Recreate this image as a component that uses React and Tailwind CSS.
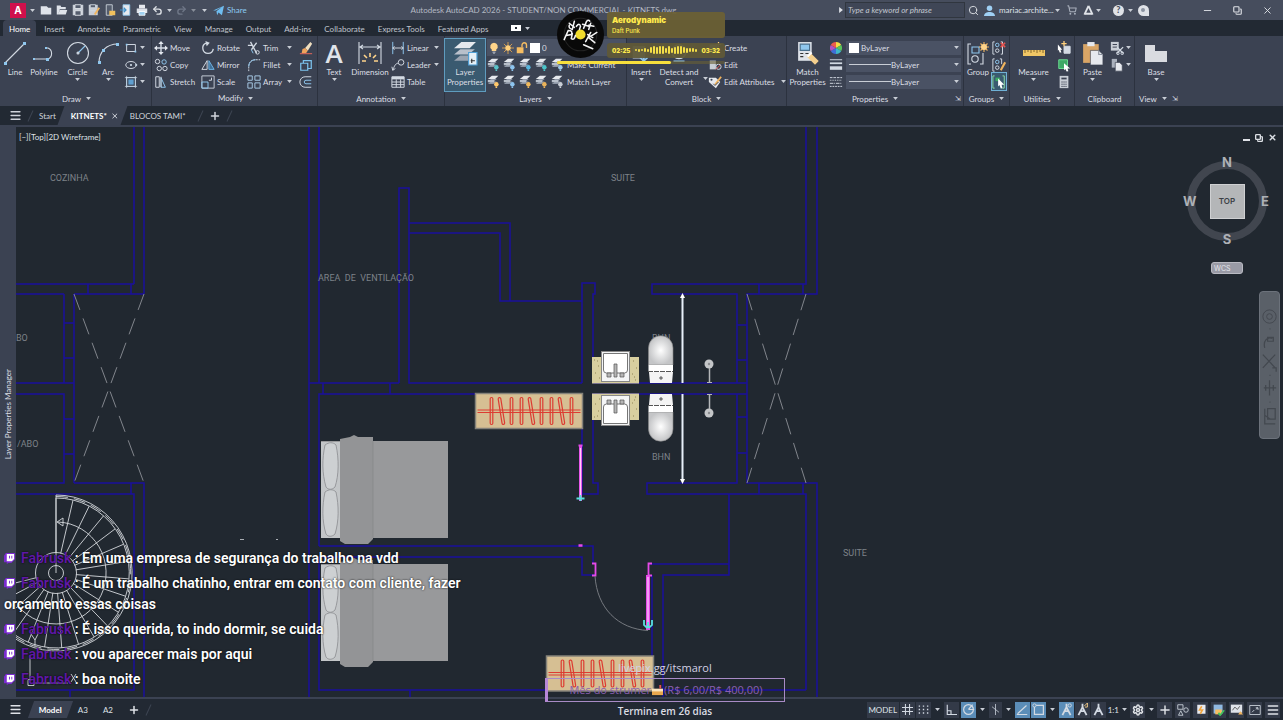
import { Menu, Plus, X, Minus, Copy, Search, ShoppingCart, Settings, Undo2 } from "lucide-react";
import clsx from "clsx";

/* ---------- small pieces ---------- */

const Svg = ({ className = "size-[14px]", box = "0 0 16 16", children }) => (
  <svg viewBox={box} className={clsx("shrink-0", className)} fill="none" stroke="#d3dae3" strokeWidth="1.1" aria-hidden="true">
    {children}
  </svg>
);

const Caret = ({ className }) => (
  <svg viewBox="0 0 8 5" className={clsx("h-[3px] w-[5px] shrink-0", className)} aria-hidden="true">
    <path d="M0 0h8L4 5z" fill="#c9ced6" />
  </svg>
);

/* ---------- icons ---------- */

const icons = {
  rect: <Svg><path d="M3 4h10v8H3z" /><path d="M2 3h2v2H2zM12 11h2v2h-2z" fill="#8fc7ee" stroke="none" /></Svg>,
  ellipse: <Svg><ellipse cx="8" cy="8" rx="6" ry="4" /><circle cx="8" cy="8" r=".8" fill="#8fc7ee" /><circle cx="14" cy="8" r=".8" fill="#8fc7ee" /></Svg>,
  hatch: <Svg><path d="M3 3h10v10H3z" stroke="#9ecbec" /><path d="M5 5h6v6H5z" fill="#5f9fd0" stroke="none" /><path d="M1 3h14M1 13h14M3 1v14M13 1v14" strokeWidth=".8" /></Svg>,
  move: <Svg><path d="M8 2v12M2 8h12" strokeWidth="1.6" /><path d="M8 0l3 3.500H5zM8 16l3-3.500H5zM0 8l3.500-3v6zM16 8l-3.500-3v6z" fill="#e4e8ee" stroke="none" /></Svg>,
  copy: <Svg><circle cx="4" cy="4" r="2.500" /><circle cx="11.500" cy="4.500" r="2.500" stroke="#8fc7ee" /><circle cx="6" cy="12" r="2.500" /><circle cx="12.500" cy="12" r="2.500" /></Svg>,
  stretch: <Svg><path d="M2 2v12h4V2z" /><path d="M8 3l5 11H8z" stroke="#8fc7ee" /><path d="M8 2v12" /></Svg>,
  rotate: <Svg><path d="M6 2.500A6 6 0 1 0 14 9" strokeWidth="1.500" /><path d="M5 0l5 2-3.500 4z" fill="#d3dae3" stroke="none" /></Svg>,
  mirror: <Svg><path d="M7 3v10H1z" stroke="#d3dae3" /><path d="M9 3v10h6z" stroke="#6fb3e4" fill="#3f6f96" /></Svg>,
  scale: <Svg><path d="M1 1h14v14H1z" strokeWidth="1" /><path d="M1 8h7v7H1z" stroke="#8fc7ee" /><path d="M9 6h3V3" /></Svg>,
  trim: <Svg><path d="M4 1l7 13M11 2L5 10M1 5h5" strokeWidth="1.500" /><circle cx="12" cy="13" r="2" /><path d="M5 10l2 4" stroke="#8fc7ee" /></Svg>,
  fillet: <Svg><path d="M2 15V10C2 5 5 2 10 2h5" strokeDasharray="2 1" /><path d="M2 10C2 5 5 2 10 2" stroke="#8fc7ee" /></Svg>,
  array: <Svg><path d="M1 1h5v5H1zM9 1h6v5H9zM1 9h5v6H1zM9 9h6v6H9z" stroke="#a9cbe6" /></Svg>,
  erase: <Svg><path d="M7 8l6-7 2 2-5 8z" fill="#f0dfc0" stroke="none" /><path d="M4 9l3-1 3 3-2 3H3z" fill="#f0a45c" stroke="none" /><path d="M1 14.500h14" stroke="#e7685c" /></Svg>,
  explode: <Svg><path d="M2 6h8v8H2zM5 6V3h9v9h-4" stroke="#7cc3ee" strokeWidth="1.400" /></Svg>,
  offset: <Svg><path d="M14 2H7a6 6 0 0 0 0 12h7" /><path d="M14 6H8a2 2 0 0 0 0 4h6" stroke="#8fc7ee" /></Svg>,
  linear: <Svg><path d="M2 1v14M14 1v14" stroke="#8fc7ee" /><path d="M2 8h12M4 6L2 8l2 2M12 6l2 2-2 2" /></Svg>,
  leader: <Svg><circle cx="11.500" cy="5" r="3.200" /><path d="M8.500 6C5 6 4 9 2 14M1 10l1 4 3-2" /></Svg>,
  table: <Svg><path d="M1 2h14v12H1z" /><path d="M1 3.500h14" strokeWidth="3" /><path d="M1 8h14M1 11h14M6 5v9M11 5v9" /></Svg>,
  bulb: <Svg className="size-[12px]"><path d="M8 1a5 5 0 0 0-3 9v2h6v-2a5 5 0 0 0-3-9z" fill="#ffd48a" stroke="none" /><path d="M6 13.500h4M7 15h2" /></Svg>,
  sun: <Svg className="size-[12px]"><path d="M8 0v16M0 8h16M2.500 2.500l11 11M13.500 2.500l-11 11" stroke="#e9a94c" /><circle cx="8" cy="8" r="3.600" fill="#ffd07c" stroke="none" /></Svg>,
  unlock: <Svg className="size-[12px]"><path d="M1 7h9v8H1z" fill="#f6bd62" stroke="none" /><path d="M8 7V4a3 3 0 0 1 6 0v4" stroke="#f6bd62" strokeWidth="1.800" /></Svg>,
  lines: <Svg><path d="M1 2h14" /><path d="M1 6h14" strokeWidth="2" /><path d="M1 11.500h14" strokeWidth="4" /></Svg>,
  dashes: <Svg><path d="M1 3h14" strokeDasharray="3 1" /><path d="M1 6h14" strokeDasharray="1 1" /><path d="M1 9.500h14" strokeDasharray="4 1 1 1" /><path d="M1 13h14" strokeDasharray="2 1" /></Svg>,
  wheel: (
    <Svg className="size-[12px]">
      <g stroke="none">
        <path d="M8 8V0a8 8 0 0 1 7 4z" fill="#f4dc45" /><path d="M8 8l7-4a8 8 0 0 1 0 8z" fill="#58c45c" />
        <path d="M8 8l7 4a8 8 0 0 1-7 4z" fill="#3fb8c9" /><path d="M8 8v8a8 8 0 0 1-7-4z" fill="#3f6fd8" />
        <path d="M8 8l-7 4a8 8 0 0 1 0-8z" fill="#b452c4" /><path d="M8 8L1 4a8 8 0 0 1 7-4z" fill="#ee5c4c" />
      </g>
    </Svg>
  ),
  ungroup: <Svg><path d="M3 1H1v14h2M10 1h2v14h-2" /><circle cx="6" cy="4.500" r="2" stroke="#8fc7ee" /><circle cx="6" cy="11" r="2" /><path d="M10 2l5 5M15 2l-5 5" stroke="#e5534f" strokeWidth="1.800" /></Svg>,
  groupEdit: <Svg><path d="M3 1H1v14h2M9 1h2v6" /><circle cx="6" cy="4.500" r="2" stroke="#8fc7ee" /><circle cx="6" cy="11" r="2" /><path d="M15 5l-5 9" stroke="#f1b45d" strokeWidth="2.400" /></Svg>,
  groupSel: <Svg><path d="M3 1H1v14h2M12 1h2v14h-2" stroke="#8fe0a8" /><path d="M4 3h5v4H4z" fill="#3da865" stroke="none" /><path d="M7 4l7 7H11l1 4-2 .500-1.500-4L7 13z" fill="#fff" stroke="none" /></Svg>,
  quickSel: <Svg><path d="M8 6h7v8H8z" fill="#d3dae3" /><path d="M1 4l5 6H4l1 3-2 0-1-3-1 1z" fill="#fff" stroke="none" /><path d="M5 3h6M8 0v6" stroke="#ffd07c" strokeWidth="1.500" /></Svg>,
  selectAll: <Svg><path d="M2 2h10v10H2z" stroke="#6bdc92" fill="#3da865" /><path d="M8 6l7 6h-3l1 3-2 .500-1.500-3L8 14z" fill="#fff" stroke="none" /></Svg>,
  calc: <Svg><path d="M3 1h10v14H3z" fill="#c9ced6" stroke="none" /><path d="M5 3h6v2H5z" fill="#3b4252" stroke="none" /><path d="M5 8h6M5 10.500h6M5 13h6" stroke="#3b4252" strokeDasharray="1.500 .8" /></Svg>,
  cut: <Svg><path d="M1 1h9v10H1z" fill="#c9ced6" stroke="none" /><path d="M3 4h5M3 7h5" stroke="#3b4252" /><path d="M8 7l7 7M15 7l-7 7" strokeWidth="1.500" /><circle cx="9" cy="14" r="1.500" /><circle cx="14" cy="14" r="1.500" /></Svg>,
  paper: <Svg><path d="M2 1h6v10H2z" fill="#aab1bd" stroke="none" /><path d="M6 5h5l3 3v7H6z" fill="#e6e9ee" stroke="#3b4252" strokeWidth=".8" /></Svg>,
  create: <Svg><path d="M2 4h9v9H2z" fill="#c9ced6" stroke="none" /><path d="M12 1v6M9 4h6" stroke="#ffd07c" strokeWidth="1.400" /></Svg>,
  edit: <Svg><path d="M2 3h7v10H2z" fill="#c9ced6" stroke="none" /><circle cx="12" cy="10" r="3" /><path d="M9 13l5-5" stroke="#e5534f" /></Svg>,
  attrs: <Svg><path d="M1 3h8l5 5-5 7-8-7z" fill="#e6e9ee" stroke="none" /><circle cx="4" cy="5.500" r="1.200" fill="#3b4252" stroke="none" /><path d="M15 2l-7 9" stroke="#f1b45d" strokeWidth="2" /><path d="M6 10l2 2 4-4" stroke="#3b4252" /></Svg>,
};

const LayerGlyph = ({ badge }) => (
  <Svg className="size-[13px]">
    <g stroke="none">
      <path d="M1 8l4-3h7l-4 3zM1 11l4-3h7l-4 3z" fill="#8d96a5" />
      <path d="M1 5l5-4h8l-4 4z" fill="#e6e9ee" />
      <path d="M1 6h8v3H1z" fill="#b9c0cb" />
      <circle cx="11.500" cy="11.500" r="2.800" fill={badge} />
      <path d="M10.500 14h2v2h-2z" fill={badge} />
    </g>
  </Svg>
);

/* ---------- ribbon ---------- */

function BigButton({ label, icon, className, arrow, active }) {
  return (
    <button
      type="button"
      className={clsx("flex h-[52px] shrink-0 flex-col items-center text-[8px] leading-[10px]", className, active && "bg-[#3a5a70] outline outline-[#5f9cbf]")}
    >
      <span className="flex h-[28px] items-center justify-center">{icon}</span>
      <span className="whitespace-pre-line text-center">{label}</span>
      {arrow && <Caret className="mt-px" />}
    </button>
  );
}

const ToolRow = ({ icon, label, arrow, className }) => (
  <button type="button" className={clsx("flex h-[17px] items-center gap-[2px] text-[8px] whitespace-nowrap", className)}>
    {icons[icon]}
    {label}
    {arrow && <Caret className="ml-auto" />}
  </button>
);

const Panel = ({ title, arrow, launcher, className, children }) => (
  <section className={clsx("flex shrink-0 flex-col border-r border-[#2c323f]", className)}>
    <div className="flex flex-1 items-start pt-[3px]">{children}</div>
    <footer className="relative flex h-[16px] items-center justify-center gap-[5px] text-[8px]">
      {title}
      {arrow && <Caret />}
      {launcher && <span className="absolute right-[2px] text-[7px]">⇲</span>}
    </footer>
  </section>
);

const drawTools = [
  ["rect", "Rectangle"],
  ["ellipse", "Ellipse"],
  ["hatch", "Hatch"],
];

const modifyTools = [
  { width: "w-[47px]", rows: [["move", "Move"], ["copy", "Copy"], ["stretch", "Stretch"]] },
  { width: "w-[46px]", rows: [["rotate", "Rotate"], ["mirror", "Mirror"], ["scale", "Scale"]] },
  { width: "w-[45px]", arrow: true, rows: [["trim", "Trim"], ["fillet", "Fillet"], ["array", "Array"]] },
];

const layerBadges = [
  ["#59c3c9", "#8ec4ee", "#59b6dd", "#4cc4c9", "#9fc9e6"],
  ["#ffc86b", "#8ec4ee", "#f0b95c", "#e9b25a", "#c9ced6"],
];

function PropertySelect({ label, icon, line }) {
  return (
    <label className="flex h-[17px] items-center gap-[3px]">
      <span className="flex w-[15px] justify-center">{icons[icon]}</span>
      <span className="relative flex h-[14px] flex-1 items-center bg-[#4a5264]">
        {line ? <span className="absolute left-[3px] h-px w-[42px] bg-[#c9ced6]" /> : <span className="absolute left-[3px] size-[10px] bg-white" />}
        <select aria-label={label} className={clsx("w-full appearance-none bg-transparent text-[8px] leading-[12px]", line ? "pl-[45px]" : "pl-[15px]")}>
          <option>ByLayer</option>
        </select>
        <Caret className="absolute right-[2px]" />
      </span>
    </label>
  );
}

function Ribbon() {
  return (
    <div className="flex h-[70px] overflow-hidden bg-[#3b4252] pl-[2px]">
      <Panel title="Draw" arrow className="w-[150px]">
        <BigButton label="Line" className="w-[26px]" icon={<Svg className="size-[24px]" box="0 0 24 24"><path d="M2 22L21 3" /><path d="M1 21h3v3H1zM20 1h3v3h-3z" fill="#8fc7ee" stroke="none" /></Svg>} />
        <BigButton label="Polyline" className="w-[32px]" icon={<Svg className="size-[24px]" box="0 0 24 24"><path d="M2 18h14a6 6 0 0 0 0-11h-2" /><path d="M1 17h2v2H1zM14 17h3v3h-3zM13 6h2v2h-2z" fill="#8fc7ee" stroke="none" /></Svg>} />
        <BigButton label="Circle" arrow className="w-[35px]" icon={<Svg className="size-[24px]" box="0 0 24 24"><circle cx="12" cy="12" r="10.500" /><path d="M12 12l7-7" stroke="#8fc7ee" /><circle cx="12" cy="12" r="1" fill="#8fc7ee" /></Svg>} />
        <BigButton label="Arc" arrow className="w-[26px]" icon={<Svg className="size-[24px]" box="0 0 24 24"><path d="M3 22C3 11 10 3 22 3" /><path d="M2 20h3v3H2zM6 8h3v3H6zM20 2h3v3h-3z" fill="#8fc7ee" stroke="none" /></Svg>} />
        <div className="flex flex-col pl-[3px]">
          {drawTools.map(([icon, name]) => (
            <button key={icon} type="button" aria-label={name} className="flex h-[17px] items-center gap-[2px]">
              {icons[icon]}
              <Caret />
            </button>
          ))}
        </div>
      </Panel>

      <Panel title="Modify" arrow className="w-[166px] pl-[2px]">
        {modifyTools.map((col) => (
          <div key={col.width} className={clsx("flex flex-col", col.width)}>
            {col.rows.map(([icon, label]) => (
              <ToolRow key={icon} icon={icon} label={label} arrow={col.arrow} />
            ))}
          </div>
        ))}
        <div className="flex flex-col pl-[7px]">
          {["erase", "explode", "offset"].map((icon) => (
            <ToolRow key={icon} icon={icon} />
          ))}
        </div>
      </Panel>

      <Panel title="Annotation" arrow className="w-[127px]">
        <BigButton label="Text" arrow className="w-[32px]" icon={<span className="font-['Open_Sans'] text-[26px] leading-none font-semibold text-[#e0e4ea]">A</span>} />
        <BigButton
          label="Dimension"
          className="w-[40px]"
          icon={
            <Svg className="size-[24px]" box="0 0 24 24">
              <path d="M1 1v22M23 1v22M2 6h20M5 4L2 6l3 2M19 4l3 2-3 2" />
              <path d="M12 12v4M6 14l3 3M18 14l-3 3M4 20h4M20 20h-4" stroke="#ffd48a" strokeWidth="1.600" />
            </Svg>
          }
        />
        <div className="flex w-[49px] flex-col pl-px">
          <ToolRow icon="linear" label="Linear" arrow />
          <ToolRow icon="leader" label="Leader" arrow />
          <ToolRow icon="table" label="Table" />
        </div>
      </Panel>

      <Panel title="Layers" arrow className="w-[182px]">
        <BigButton
          label={"Layer\nProperties"}
          active
          className="w-[40px]"
          icon={
            <Svg className="size-[25px]" box="0 0 24 24">
              <g stroke="none">
                <path d="M1 19l6-5h14l-6 5z" fill="#9aa3b0" /><path d="M1 13l6-5h14l-6 5z" fill="#b9c0cb" />
                <path d="M1 7l7-6h14l-6 6z" fill="#e6e9ee" />
              </g>
              <path d="M15 11h8v12h-8z" fill="#e6f0f7" stroke="#4f9fd6" /><path d="M17 19h4M18 17v4" stroke="#333" />
            </Svg>
          }
        />
        <div className="flex flex-1 flex-col pl-[2px]">
          <label className="flex h-[17px] items-center gap-[2px] bg-[#4a5264] pl-px">
            {icons.bulb}{icons.sun}{icons.unlock}
            <span className="size-[10px] bg-white" />
            <select aria-label="Layer" className="flex-1 appearance-none bg-transparent text-[8px]"><option>0</option></select>
          </label>
          {layerBadges.map((row, i) => (
            <div key={i} className="flex h-[17px] items-center gap-[3px] text-[8px] whitespace-nowrap">
              {row.map((badge, j) => <LayerGlyph key={j} badge={badge} />)}
              <button type="button">{i ? "Match Layer" : "Make Current"}</button>
            </div>
          ))}
        </div>
      </Panel>

      <Panel title="Block" arrow className="w-[160px]">
        <BigButton label="Insert" arrow className="w-[28px]" icon={<Svg className="size-[22px]"><path d="M2 3h9v9H2z" fill="#c9ced6" stroke="none" /><path d="M10 5v9M7 11l3 3 3-3" stroke="#8fc7ee" /></Svg>} />
        <BigButton label={"Detect and\nConvert"} className="w-[48px]" icon={<Svg className="size-[22px]"><circle cx="8" cy="7" r="5" /><path d="M4 14h8" stroke="#8fc7ee" /></Svg>} />
        <Caret className="mt-[38px]" />
        <div className="flex flex-1 flex-col">
          <ToolRow icon="create" label="Create" />
          <ToolRow icon="edit" label="Edit" />
          <ToolRow icon="attrs" label="Edit Attributes" arrow />
        </div>
      </Panel>

      <Panel title="Properties" arrow launcher className="w-[177px]">
        <BigButton
          label={"Match\nProperties"}
          className="w-[41px]"
          icon={
            <Svg className="size-[25px]" box="0 0 24 24">
              <path d="M3 1h13v18H3z" fill="#dfe3ea" stroke="none" /><path d="M5 3h9v6H5z" fill="#8fc7ee" stroke="#4a6f8c" />
              <path d="M5 12h3M5 15h3M10 12h3" stroke="#333" /><path d="M13 13l8 8" stroke="#f3cf8e" strokeWidth="5" /><path d="M12 15l4-4" stroke="#fff" strokeWidth="2" />
            </Svg>
          }
        />
        <div className="flex flex-1 flex-col pr-[2px]">
          <PropertySelect label="Color" icon="wheel" />
          <PropertySelect label="Lineweight" icon="lines" line />
          <PropertySelect label="Linetype" icon="dashes" line />
        </div>
      </Panel>

      <Panel title="Groups" arrow className="w-[46px]">
        <BigButton
          label="Group"
          className="w-[28px]"
          icon={
            <Svg className="size-[24px]" box="0 0 24 24">
              <path d="M5 3H2v20h3M14 23h3V12" /><path d="M6 6h7v6H6z" stroke="#8fc7ee" /><circle cx="9" cy="18" r="3.200" />
              <path d="M18 1v10M13 6h10M14.500 2.500l7 7M21.500 2.500l-7 7" stroke="#f1b45d" /><circle cx="18" cy="6" r="3" fill="#ffd48a" stroke="none" />
            </Svg>
          }
        />
        <div className="flex flex-col">
          <ToolRow icon="ungroup" />
          <ToolRow icon="groupEdit" />
          <ToolRow icon="groupSel" className="bg-[#3a5a70] outline outline-[#6fb1d6]" />
        </div>
      </Panel>

      <Panel title="Utilities" arrow className="w-[65px]">
        <BigButton label="Measure" arrow className="w-[47px]" icon={<Svg className="h-[8px] w-[22px]" box="0 0 22 8"><path d="M0 1h22v6H0z" fill="#f0c665" stroke="none" /><path d="M2 1v3M5 1v2M8 1v3M11 1v2M14 1v3M17 1v2M20 1v3" stroke="#6b5220" strokeWidth=".8" /></Svg>} />
        <div className="flex flex-col">
          <ToolRow icon="quickSel" />
          <ToolRow icon="selectAll" />
          <ToolRow icon="calc" />
        </div>
      </Panel>

      <Panel title="Clipboard" className="w-[60px]">
        <BigButton label="Paste" arrow className="w-[35px]" icon={<Svg className="size-[25px]" box="0 0 24 24"><path d="M3 3h15v18H3z" fill="#d9a566" stroke="none" /><path d="M7 1h7v4H7z" fill="#e6e9ee" stroke="none" /><path d="M10 9h8l4 4v10H10z" fill="#e6e9ee" stroke="#3b4252" strokeWidth=".6" /><path d="M18 9v4h4" stroke="#8a919e" /></Svg>} />
        <div className="flex flex-col">
          <ToolRow icon="cut" arrow />
          <ToolRow icon="paper" arrow />
        </div>
      </Panel>

      <section className="flex flex-1 flex-col items-start">
        <div className="flex flex-1 items-start pt-[3px]">
          <BigButton label="Base" arrow className="w-[42px]" icon={<Svg className="size-[22px]" box="0 0 22 22"><path d="M0 3h10v6h12v11H0z" fill="#d9dbe0" stroke="none" /></Svg>} />
        </div>
        <footer className="flex h-[16px] items-center gap-[5px] pl-[4px] text-[8px]">
          View <Caret /> <span className="text-[7px]">⇲</span>
        </footer>
      </section>
    </div>
  );
}

/* ---------- title bar and tabs ---------- */

const quickAccess = [
  ["New", <path d="M1 3h8l2 2h4v9H1z" fill="#dfe3ea" stroke="none" />],
  ["Open", <path d="M1 2h5l1 2h6v3H5l-2 7H1zM5 8h10l-2 6H3z" fill="#dfe3ea" stroke="none" />],
  ["Save", <><path d="M1 1h14v14H1z" fill="#c9ced6" stroke="none" /><path d="M4 1h8v5H4zM4 9h8v6H4z" fill="#555d6d" stroke="#e6e9ee" /></>],
  ["Save As", <><path d="M1 1h12v14H1z" fill="#c9ced6" stroke="none" /><path d="M3 1h7v4H3zM3 9h7" fill="#555d6d" /><path d="M15 5l-6 9" stroke="#f1b45d" strokeWidth="2.500" /></>],
  ["Open from Web", <><path d="M3 1h8v14H3z" fill="#555d6d" /><path d="M7 9h8v6H7z" fill="#f1c15d" stroke="none" /></>],
  ["Save to Web", <><path d="M4 1h9v14H4z" fill="#e6e9ee" stroke="#8fc7ee" /><path d="M0 8h8M5 5l3 3-3 3" stroke="#3f8fc8" strokeWidth="1.600" /></>],
  ["Plot", <><path d="M4 1h8v5H4z" fill="#e6e9ee" stroke="none" /><path d="M1 6h14v6H1z" fill="#dfe3ea" stroke="none" /><path d="M4 10h8v5H4z" fill="#9fd0f0" stroke="#fff" /></>],
];

function TitleBar() {
  return (
    <header className="flex h-[20px] items-center bg-[#464d5d] text-[8px]">
      <div className="flex w-[248px] shrink-0 items-center gap-[4px] pl-[10px]">
        <button type="button" className="flex h-[15px] w-[16px] items-center justify-center bg-[#d0104c] font-['Inter'] text-[10px] font-bold text-white">A</button>
        <Caret className="mr-px" />
        {quickAccess.map(([name, art]) => (
          <button key={name} type="button" aria-label={name}><Svg className="size-[12px]">{art}</Svg></button>
        ))}
        <button type="button" aria-label="Undo"><Undo2 className="size-[11px]" strokeWidth={3} /></button>
        <Caret />
        <button type="button" aria-label="Redo"><Undo2 className="size-[11px] -scale-x-100 text-[#6f7787]" strokeWidth={3} /></button>
        <Caret className="opacity-50" />
        <Caret className="mx-[2px]" />
        <a href="#share" className="flex items-center gap-[3px] text-[#8ccaf2]">
          <svg viewBox="0 0 16 16" className="size-[11px]" aria-hidden="true"><path d="M0 8L16 1l-3 14-5-4-2 4-1-6 8-6-9 5z" fill="#6fbdf0" /></svg>
          Share
        </a>
      </div>
      <h1 className="flex-1 truncate text-center text-[8px] text-[#b4b9c3]">Autodesk AutoCAD 2026 - STUDENT/NON COMMERCIAL - KITNETS.dwg</h1>
      <div className="flex w-[444px] shrink-0 items-center text-[#dfe2e7]">
        <svg viewBox="0 0 5 8" className="mr-[2px] h-[6px] w-[4px]" aria-hidden="true"><path d="M0 0l5 4-5 4z" fill="#dfe2e7" /></svg>
        <input aria-label="Search" placeholder="Type a keyword or phrase" className="h-[16px] w-[120px] border border-[#30363f] bg-[#3f4656] px-[2px] text-[8px] italic placeholder:text-[#c3c8d0]" />
        <Search className="ml-[3px] size-[11px]" />
        <svg viewBox="0 0 12 12" className="ml-[5px] size-[11px]" aria-hidden="true"><circle cx="6" cy="3.500" r="3" fill="#9fd0f4" /><path d="M0 12c0-6 12-6 12 0z" fill="#9fd0f4" /></svg>
        <span className="ml-[4px]">mariac.archite...</span>
        <Caret className="ml-px" />
        <ShoppingCart className="ml-[7px] size-[10px] text-[#a9b0bc]" strokeWidth={2.500} />
        <svg viewBox="0 0 12 12" className="ml-[6px] size-[11px]" aria-hidden="true"><path d="M6 1L1.500 10.500M6 1l4.500 9.500M2 9.500h8M6 1" stroke="#dfe2e7" strokeWidth="2" fill="none" /></svg>
        <Caret className="ml-[2px]" />
        <span className="ml-[12px] flex size-[11px] items-center justify-center rounded-full bg-[#dfe2e7] text-[9px] font-black text-[#464d5d]">?</span>
        <Caret className="ml-[4px]" />
        <span className="ml-[5px] flex size-[11px] items-center justify-center rounded-full rounded-br-none bg-[#dfe2e7]"><span className="size-[4px] rounded-full bg-[#8b93a1]" /></span>
        <div className="ml-auto flex items-center gap-[20px] pr-[10px]">
          <button type="button" aria-label="Minimize"><Minus className="size-[11px]" /></button>
          <button type="button" aria-label="Restore"><Copy className="size-[9px] -scale-x-100 rotate-90" strokeWidth={3} /></button>
          <button type="button" aria-label="Close"><X className="size-[11px]" /></button>
        </div>
      </div>
    </header>
  );
}

const ribbonTabs = ["Home", "Insert", "Annotate", "Parametric", "View", "Manage", "Output", "Add-ins", "Collaborate", "Express Tools", "Featured Apps"];

const RibbonTabs = () => (
  <nav className="flex h-[16px] items-stretch gap-px bg-[#222933] pl-[3px] text-[8px] text-[#c0c5ce]">
    {ribbonTabs.map((tab, i) => (
      <button key={tab} type="button" className={clsx("px-[6px] pt-px whitespace-nowrap", i === 0 && "mr-px rounded-t-sm bg-[#3b4252] text-white")}>
        {tab}
      </button>
    ))}
    <button type="button" aria-label="Ribbon display" className="ml-[16px] flex items-center gap-[4px]">
      <span className="flex h-[6px] w-[10px] items-center justify-center bg-white"><span className="size-[2px] bg-[#222933]" /></span>
      <Caret />
    </button>
  </nav>
);

const Slash = () => <span className="h-[12px] w-px rotate-[25deg] bg-[#3d4452]" />;

const FileTabs = () => (
  <nav className="flex h-[19px] items-center bg-[#222933] text-[8px] text-[#d0d4db]">
    <button type="button" aria-label="File menu" className="ml-[9px]"><Menu className="size-[13px]" strokeWidth={3} /></button>
    <span className="ml-[8px] flex items-center"><Slash /></span>
    <button type="button" className="ml-[8px]">Start</button>
    <span className="ml-[5px] flex h-full -skew-x-[20deg] items-center bg-[#3b4252] pr-[5px] pl-[10px]">
      <button type="button" className="skew-x-[20deg] font-bold text-white">KITNETS*</button>
      <button type="button" aria-label="Close KITNETS" className="ml-[4px] skew-x-[20deg]"><X className="size-[8px]" strokeWidth={3} /></button>
    </span>
    <button type="button" className="ml-[6px]">BLOCOS TAMI*</button>
    <span className="ml-[14px] flex items-center"><Slash /></span>
    <button type="button" aria-label="New drawing" className="mx-[8px]"><Plus className="size-[12px]" strokeWidth={3} /></button>
    <Slash />
  </nav>
);

/* ---------- drawing ---------- */

const walls = [
  // left flat
  "M134 127V284M144 127V294M16 284H134M16 294H64M74 294H144M88 284V294M131 284V294",
  "M64 294V383M74 294V483M64 323H74M64 358H74M16 383H74M16 394H64V483H16M64 419H74M64 454H74",
  "M74 483H144V697M131 483V494M16 494H134V690H16M70 690V697",
  // bedrooms
  "M309 127V697M319 127V383M309 383H399M399 383V188H409V383H582M323 383V394M309 383H319M390 383V394",
  "M409 223H510V301M409 233H500V301H582M582 383V283H595V294H593V383M593 383H747M319 546V394H582V494H598V483H593V394H747",
  "M319 546H593V564M319 557H582V575H595M319 557V690H806M410 690V697",
  // right suite
  "M806 127V284H652V294H737V383M817 127V294H747V483H817V697M759 284V294M803 284V294M737 394V483H647V494H806V690",
  "M737 325H747M737 360H747M737 417H747M737 453H747M759 483V494M803 483V494M729 494V575H663V697M650 564H729M652 575V656",
].join("");

const stairSteps = Array.from({ length: 20 }, (_, i) => {
  const a = ((i * 13.5) * Math.PI) / 180;
  return [56 + 20 * Math.sin(a), 573 - 20 * Math.cos(a), 56 + 73 * Math.sin(a), 573 - 75 * Math.cos(a)];
});

const Wardrobe = ({ x, y }) => (
  <g transform={`translate(${x} ${y})`}>
    <rect width="107" height="35" fill="#d6bf93" stroke="#85827a" strokeWidth="1.500" />
    <g fill="none" stroke="#dd3c32">
      <path d="M2 16.500H105M2 19H105" />
      {[0, 1, 2, 3, 4, 5, 6, 7, 8].map((i) => (
        <rect key={i} x="-1.300" y="-14" width="2.600" height="27" rx="1.200" strokeWidth="1.200" transform={`translate(${16 + i * 10} 18) rotate(${i % 3 === 1 ? -9 : 0})`} />
      ))}
    </g>
  </g>
);

const Bed = ({ y }) => (
  <g transform={`translate(0 ${y})`}>
    <path d="M321 0H448V97H321z" fill="#98999b" />
    <path d="M321 1H340V97H321z" fill="#c3c6c8" />
    <g fill="#cdd0d2" stroke="#8a8c8f" strokeWidth=".8">
      <path d="M325 4C329 1 333 1 336 4C339 18 339 34 335 46C332 49 328 49 326 46C322 32 322 18 325 4z" />
      <path d="M325 51C329 48 333 48 336 51C339 65 339 80 335 93C332 96 328 96 326 93C322 80 322 65 325 51z" />
    </g>
    <path d="M340-2L350-4L354-6L358-4H373V98L368 103H345L340 100z" fill="#939496" />
    <path d="M373 0V97" stroke="#858688" strokeWidth=".7" />
  </g>
);

// half of the back-to-back bathroom pair, the other half is mirrored on y=388.5
const Bathroom = () => (
  <g>
    <rect x="592" y="357" width="47" height="26.500" fill="#d8cf9f" />
    <path d="M594 360h1M598 366h1M595 373h1M599 378h1M633 361h1M636 368h1M632 374h1M635 380h1M597 361h1M634 377h1" stroke="#8f8455" />
    <rect x="601.500" y="351.500" width="28" height="30" fill="#f4f5f6" stroke="#888" />
    <path d="M603.500 353.500H627.500V370Q627.500 373 624.500 373H606.500Q603.500 373 603.500 370z" fill="#fff" stroke="#777" />
    <path d="M614 364h3v13h-3zM607 373h4v4h-4zM620 373h4v4h-4z" fill="#b5b5b5" stroke="#555" strokeWidth=".7" />
    <path d="M648.500 365V348A12.200 12.200 0 0 1 673 348V365z" fill="url(#bowl)" stroke="#888" strokeWidth=".6" />
    <path d="M648.500 365H673V372H648.500z" fill="#fff" />
    <path d="M649 372H673L672 383H650z" fill="#f4f4f4" />
    <path d="M648 371.500H673" stroke="#555" strokeDasharray="5 1" />
    <circle cx="661" cy="378" r="1.300" fill="#999" stroke="#444" strokeWidth=".6" />
    <path d="M682.500 296V383" stroke="#e8f0fa" strokeWidth="2" />
    <path d="M682.500 293l2.500 5h-5z" fill="#fff" />
    <circle cx="709" cy="364" r="4.500" fill="#c4c6c8" />
    <circle cx="709" cy="364" r="1.200" fill="#8a8c8f" />
    <path d="M709.500 368V383" stroke="#b4b6b8" strokeWidth="1.500" />
    <path d="M707 382.500h5" stroke="#b4b6b8" />
  </g>
);

const roomNames = [
  ["COZINHA", 50, 181],
  ["SUITE", 611, 181],
  ["AREA  DE  VENTILAÇÃO", 318, 281],
  ["BHN", 652, 341],
  ["BHN", 652, 460],
  ["SUITE", 843, 556],
  ["BO", 16, 341],
  ["/ABO", 17, 447],
];

const FloorPlan = () => (
  <svg viewBox="16 127 1267 570" preserveAspectRatio="xMinYMin slice" className="block size-full" fill="none" role="img" aria-label="KITNETS floor plan">
    <defs>
      <radialGradient id="bowl">
        <stop offset="0" stopColor="#fff" />
        <stop offset="1" stopColor="#c4c5c7" />
      </radialGradient>
    </defs>
    <path d={walls} stroke="#1a0f9c" strokeWidth="1.500" />
    <path d="M74 294L144 483M144 294L74 483M747 294L806 483M806 294L747 483" stroke="#8c9096" strokeWidth=".9" strokeDasharray="17 9" />
    <g fill="#7d8288" className="font-['Roboto'] text-[9px]">
      {roomNames.map(([name, x, y]) => (
        <text key={name + y} x={x} y={y} className="whitespace-pre">{name}</text>
      ))}
    </g>
    <Bathroom />
    <g transform="translate(0 777) scale(1 -1)"><Bathroom /></g>
    <Wardrobe x={475.500} y={393.500} />
    <Wardrobe x={546.500} y={656} />
    <Bed y={441} />
    <Bed y={564} />

    <g stroke="#d5d8dc" strokeWidth=".9">
      {stairSteps.map(([x1, y1, x2, y2], i) => (
        <line key={i} x1={x1} y1={y1} x2={x2} y2={y2} />
      ))}
      <circle cx="56" cy="573" r="7.500" />
      <circle cx="56" cy="573" r="20.500" />
      <path d="M56 495A76 78 0 1 1 10 635M56 498A73 75 0 1 1 10 631" />
      <path d="M56 496.500A74.500 76.500 0 1 1 10 633" strokeDasharray="12 6" />
      <path d="M58 522A50 51 0 1 1 18 606M63 518L57 522L63 526z" />
      <path d="M56 573V495" />
      <path d="M30 655V681M34 683H68M28 679.500h6v6h-6zM71 674l5 8M76 674l-5 8M31 634l4 6 3-6M35 640v6" />
    </g>
    <path d="M240 539.500h4M276 539.500h2" stroke="#a9adb3" />

    <g stroke="#e64ae8">
      <path d="M580.500 445V501" strokeWidth="3" />
      <path d="M648 575V630" strokeWidth="4" />
      <path d="M578.500 445.500h4" strokeWidth="2" />
      <path d="M592 563.500h3.500v12H592M652 563.500h-3.500v12H652" strokeWidth="1.800" />
      <path d="M578.500 545.500h4" strokeWidth="2.500" />
    </g>
    <path d="M580.500 448V498M648 577V628" stroke="#fbd0fb" strokeWidth="1.200" />
    <path d="M576.500 498.500h8M580.500 495v6M644 620v5q4 5 8 0v-5M648 622v6" stroke="#58e0dc" strokeWidth="1.800" />
    <path d="M595 576C597 608 618 629 648 630.500" stroke="#75797f" />
  </svg>
);

function ViewCube() {
  const letter = "absolute text-[13px] leading-none font-bold";
  return (
    <div className="absolute top-[30px] right-[13px] flex w-[86px] flex-col items-center font-['Inter'] text-[#aeb1b6]">
      <div className="relative flex size-[88px] items-center justify-center">
        <div className="size-[80px] rounded-full border-[8px] border-[#41464f]" />
        <button type="button" className="absolute size-[35px] border border-[#cfd0d2] bg-[#b4b6b8] text-[8px] font-semibold text-[#3b3f45]">TOP</button>
        <span className={clsx(letter, "-top-px")}>N</span>
        <span className={clsx(letter, "-bottom-px")}>S</span>
        <span className={clsx(letter, "left-0")}>W</span>
        <span className={clsx(letter, "right-[2px]")}>E</span>
      </div>
      <button type="button" className="mt-[17px] h-[12px] w-[32px] rounded-[3px] border border-[#b9bac2] bg-[#999aa5] pl-[2px] text-left text-[7px] leading-none text-[#e3e4ea]">WCS</button>
    </div>
  );
}

const NavBar = () => (
  <div className="absolute top-[164px] right-[3px] flex h-[148px] w-[21px] flex-col items-center rounded-sm border border-[#6c727b] bg-[#5a6068]">
    <svg viewBox="0 0 20 146" className="size-full" fill="none" stroke="#43484f" aria-label="Navigation bar">
      <circle cx="10" cy="22" r="7" /><circle cx="10" cy="22" r="3" />
      <path d="M10 35h1M5 55c-2-8 3-12 8-10M8 44h6v4H8zM3 62l13 14M16 62L3 76M13 76h4v4M10 84h1M10 89v16M4 97h13M6 94v6M14 94v6M10 112h1M5 119v16h11M8 119h8v11H8zM5 126l6 4" strokeWidth="1.300" />
    </svg>
  </div>
);

function Viewport() {
  return (
    <main className="flex min-h-0 flex-1 border-t-2 border-[#3b4252]">
      <aside className="flex w-[16px] shrink-0 items-end justify-center bg-[#3b4252] pb-[238px]">
        <button type="button" className="rotate-180 text-[8px] whitespace-nowrap [writing-mode:vertical-rl]">Layer Properties Manager</button>
      </aside>
      <div className="relative min-w-0 flex-1 overflow-hidden bg-[#212830]">
        <FloorPlan />
        <button type="button" className="absolute top-[4px] left-[3px] text-[8px] text-[#dfe2e7]">[−][Top][2D Wireframe]</button>
        <div className="absolute top-[6px] right-[6px] flex items-center gap-[5px]">
          <button type="button" aria-label="Minimize drawing" className="mt-[5px] h-[2px] w-[7px] bg-[#dfe2e7]" />
          <button type="button" aria-label="Restore drawing"><Copy className="size-[8px] -scale-x-100 rotate-90" strokeWidth={4} /></button>
          <button type="button" aria-label="Close drawing"><X className="size-[9px]" strokeWidth={4} /></button>
        </div>
        <ViewCube />
        <NavBar />
      </div>
    </main>
  );
}

/* ---------- status bar ---------- */

const StatusButton = ({ children, on, name, w = "w-[15px]" }) => (
  <button type="button" aria-label={name} className={clsx("flex h-[16px] shrink-0 items-center justify-center", w, on ? "bg-[#5b8db8]" : "bg-[#333a48]")}>
    {children}
  </button>
);

const Person = ({ extra }) => <Svg className="size-[13px]"><path d="M8 1v6M8 5L3 15M8 5l5 10M5 10h6" strokeWidth="2.200" />{extra}</Svg>;

const statusItems = [
  { name: "Grid", art: <Svg className="size-[11px]"><path d="M5 0v16M11 0v16M0 5h16M0 11h16" strokeWidth="1.500" /></Svg>, mr: "mr-px" },
  { name: "Snap", art: <Svg className="size-[11px]"><path d="M1 3h14M1 8h14M1 13h14" strokeWidth="2" strokeDasharray="2 4" /></Svg>, caret: true },
  { name: "Ortho", art: <Svg className="size-[12px]"><path d="M3 1v13h13M3 9h5v5" strokeWidth="1.500" /></Svg>, mr: "mr-[2px]" },
  { name: "Polar", on: true, art: <Svg className="size-[13px]"><circle cx="8" cy="8" r="6" strokeWidth="1.500" /><path d="M8 8h7M8 8l5-6" strokeWidth="1.500" /></Svg>, caret: true },
  { name: "Isodraft", w: "w-[13px]", art: <Svg className="size-[11px]"><path d="M3 4l10 8M8 0v16" /></Svg>, caret: true },
  { name: "Object snap tracking", on: true, art: <Svg className="size-[12px]"><path d="M2 13L14 2M1 14h14" strokeWidth="1.500" /></Svg>, mr: "mr-px" },
  { name: "Object snap", on: true, art: <Svg className="size-[13px]"><path d="M3 3h11v11H3z" strokeWidth="1.500" /><circle cx="3" cy="3" r="2" fill="#5b8db8" /></Svg>, caret: true },
  { name: "Annotation visibility", on: true, art: <Person extra={<circle cx="12" cy="3" r="2" />} />, mr: "mr-px" },
  { name: "Auto scale", art: <Person extra={<path d="M10 4l4-4v5h-3" stroke="#ffd48a" />} />, mr: "mr-px" },
  { name: "Annotation", art: <Person /> },
];

const StatusBar = () => (
  <footer className="flex h-[23px] shrink-0 items-center border-t-2 border-[#3b4252] bg-[#222933] text-[8px] text-[#dfe2e7]">
    <button type="button" aria-label="Layout menu" className="ml-[9px]"><Menu className="size-[13px]" strokeWidth={3} /></button>
    <span className="ml-[9px] flex h-[17px] -skew-x-[20deg] items-center bg-[#3b4252] px-[8px]">
      <button type="button" className="skew-x-[20deg] font-bold text-white">Model</button>
    </span>
    <button type="button" className="ml-[8px]">A3</button>
    <span className="ml-[7px]"><Slash /></span>
    <button type="button" className="ml-[8px]">A2</button>
    <span className="ml-[7px]"><Slash /></span>
    <button type="button" aria-label="New layout" className="mx-[8px]"><Plus className="size-[12px]" strokeWidth={3} /></button>
    <Slash />
    <div className="ml-auto flex items-center pr-[3px]">
      <button type="button" className="mr-px h-[16px] w-[32px] bg-[#333a48]">MODEL</button>
      {statusItems.map((item) => (
        <div key={item.name} className={clsx("flex items-center", item.mr)}>
          <StatusButton name={item.name} on={item.on} w={item.w}>{item.art}</StatusButton>
          {item.caret && <Caret className="mx-[4px]" />}
        </div>
      ))}
      <button type="button" className="ml-[2px] flex h-[16px] items-center gap-[3px]">1:1 <Caret /></button>
      <span className="ml-[3px] flex items-center gap-[4px]"><StatusButton name="Workspace"><Settings className="size-[12px]" strokeWidth={3} /></StatusButton><Caret /></span>
      <span className="ml-[3px] flex items-center gap-[3px]">
        <StatusButton name="Monitor"><Plus className="size-[14px]" strokeWidth={2.500} /></StatusButton>
        <StatusButton name="Isolate"><Svg className="size-[12px]"><path d="M1 1h7v6H1zM5 9l3 6H2z" /><circle cx="12" cy="8" r="3" /></Svg></StatusButton>
        <StatusButton name="Hardware"><Svg className="size-[12px]"><path d="M3 1h11v12H3z" fill="#e6e9ee" stroke="none" /><path d="M9 3l-3 5h4l-3 5" stroke="#f1a53d" strokeWidth="2" /></Svg></StatusButton>
        <StatusButton name="Trusted"><Svg className="size-[13px]"><path d="M2 2h11v11H2z" fill="#8fb8e0" stroke="none" /><path d="M4 8h8v6H4z" fill="#f6bd62" stroke="none" /><path d="M8 12l2 3 5-6" stroke="#3fc45c" strokeWidth="2" /></Svg></StatusButton>
        <StatusButton name="Performance"><Svg className="size-[13px]"><path d="M1 2h14v10H1z" fill="#dfe3ea" stroke="none" /><path d="M3 9l3-4 3 3 3-4" stroke="#555" /><path d="M10 14l3-4 3 4z" fill="#f1b45d" stroke="none" /></Svg></StatusButton>
        <StatusButton name="Clean screen"><Svg className="size-[12px]"><path d="M1 2h14v12H1zM4 11l3-3M9 7l3-2M9 5h3v3" /></Svg></StatusButton>
        <StatusButton name="Customization"><Menu className="size-[14px]" strokeWidth={2.500} /></StatusButton>
      </span>
    </div>
  </footer>
);

/* ---------- stream overlays ---------- */

const waveform = [2, 3, 2, 4, 3, 6, 8, 7, 8, 8, 5, 8, 5, 7, 8, 8, 6, 5, 4, 4, 3];

const NowPlaying = () => (
  <div className="absolute top-[11px] left-[557px] flex w-[168px] flex-col font-['Inter'] text-[#ffea4d]">
    <div className="flex items-center gap-[3px]">
      <svg viewBox="0 0 46 46" className="size-[47px] shrink-0" aria-label="Daft Punk">
        <circle cx="23" cy="23" r="23" fill="#090909" />
        <circle cx="23" cy="23" r="16" fill="none" stroke="#222" />
        <circle cx="23" cy="23" r="5" fill="#f1dc2c" />
        <g fill="none" stroke="#f4f4f4" strokeWidth="1.500" strokeLinecap="round">
          <path d="M12 12l5 4M17 10l-2 8q-4-1-3-4M19 15q3-4 4 0l-1 3M26 17l3-7q2-2 3 0M25 13l6 2M33 12l-2 6M31 14l5 1" />
          <path d="M7 28l4-9q5 0 3 4l-5 1M15 22l-1 5q3 2 4-3M30 23l5 3M28 30l5-9M31 26l8-5M31 26l6 5M26 33l9 4" />
        </g>
      </svg>
      <div className="flex h-[46px] flex-1 flex-col gap-[5px]">
        <div className="h-[26px] rounded-[3px] bg-[#6b6035]/95 px-[5px] pt-[3px]">
          <p className="text-[8px] leading-[11px] font-black">Aerodynamic</p>
          <p className="text-[6px] leading-[9px] font-medium">Daft Punk</p>
        </div>
        <div className="flex h-[15px] items-center justify-between rounded-[3px] bg-[#5f5838]/95 px-[5px] text-[6px] font-black">
          <span>02:25</span>
          <span className="flex items-center gap-px">
            {waveform.map((h, i) => <i key={i} className="w-[2px] rounded-full bg-[#f4de48]" style={{ height: h }} />)}
          </span>
          <span>03:32</span>
        </div>
      </div>
    </div>
    <div className="mt-[3px] h-[3px] rounded-full bg-[#6b6035]/60"><div className="h-full w-[68%] rounded-full bg-[#f7df3c]" /></div>
  </div>
);

const messages = [
  "Em uma empresa de segurança do trabalho na vdd",
  "É um trabalho chatinho, entrar em contato com cliente, fazer orçamento essas coisas",
  "É isso querida, to indo dormir, se cuida",
  "vou aparecer mais por aqui",
  "boa noite",
];

const Chat = () => (
  <ul className="absolute bottom-[30px] left-[4px] flex w-[466px] flex-col gap-[4px] font-['Roboto'] text-[14px] leading-[21px] font-semibold text-white [text-shadow:0_0_2px_#000]">
    {messages.map((text) => (
      <li key={text}>
        <svg viewBox="0 0 12 12" className="mr-[6px] inline-block size-[11px] align-[-1px]" aria-label="Twitch">
          <path d="M2 0h10v7L8 11H5l-2 1v-2H0V3z" fill="#7a2bd0" />
          <path d="M3 1h8v5.500L8.500 9H3z" fill="#fff" />
          <path d="M6 3v3M8.500 3v3" stroke="#7a2bd0" />
        </svg>
        <span className="text-[#5f18a6]">Fabrusk</span> : {text}
      </li>
    ))}
  </ul>
);

const Goal = () => (
  <div className="absolute bottom-[3px] left-[545px] flex w-[240px] flex-col items-center font-['Open_Sans'] text-[11px] leading-[12px] text-[#dcdde4]">
    <p className="text-[#d3d0e4]">livepix.gg/itsmarol</p>
    <div className="mt-[4px] mb-[3px] flex h-[24px] w-full items-center justify-center gap-px border border-l-[3px] border-[#a98bc6] border-l-[#b787d8] text-[#8a5fb0]">
      <span>Mês do strumer</span>
      <svg viewBox="0 0 12 12" className="size-[11px]" aria-hidden="true">
        <path d="M0 5h12v6H0z" fill="#e9a84e" /><path d="M0 4h12v3H0z" fill="#fbe6c0" /><path d="M9 0v4" stroke="#e5534f" strokeWidth="2" />
      </svg>
      <span>(R$ 6,00/R$ 400,00)</span>
    </div>
    <p className="text-[10px] font-semibold">Termina em 26 dias</p>
  </div>
);

export default function App() {
  return (
    <div className="relative flex h-screen min-h-[480px] flex-col overflow-hidden bg-[#222933] font-['Lato',sans-serif] text-[#dcdfe4]">
      <TitleBar />
      <RibbonTabs />
      <Ribbon />
      <FileTabs />
      <Viewport />
      <StatusBar />
      <NowPlaying />
      <Chat />
      <Goal />
    </div>
  );
}
